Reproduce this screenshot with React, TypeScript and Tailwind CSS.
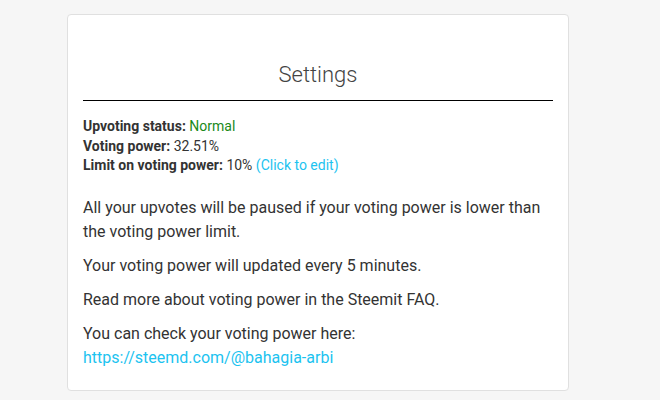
import React from "react";

export default function App() {
  return (
    <div className="min-h-[400px] w-[660px] bg-[#f6f6f6] pt-[14px]" style={{ fontFamily: "Roboto, 'Liberation Sans', sans-serif" }}>
      <div className="ml-[67px] w-[502px] h-[377px] rounded-[4px] border border-[#e0e0e0] bg-white px-[15px] text-[#333]">
        <h1 className="pt-[47px] pb-[13px] text-center text-[22px] font-light leading-[25px] text-[#444] border-b border-black">Settings</h1>
        <div className="mt-[16px] text-[14px] leading-[19.5px]">
          <div><span className="font-bold">Upvoting status:</span> <span className="text-[#1a8a1a]">Normal</span></div>
          <div><span className="font-bold">Voting power:</span> 32.51%</div>
          <div><span className="font-bold">Limit on voting power:</span> 10% <span className="text-[#1cc3f0]">(Click to edit)</span></div>
        </div>
        <div className="mt-[20px] text-[16px] leading-[24px]">
          <p>All your upvotes will be paused if your voting power is lower than the voting power limit.</p>
          <p className="mt-[10px]">Your voting power will updated every 5 minutes.</p>
          <p className="mt-[10px]">Read more about voting power in the Steemit FAQ.</p>
          <p className="mt-[10px]">You can check your voting power here:<br /><span className="text-[#1cc3f0]">https://steemd.com/@bahagia-arbi</span></p>
        </div>
      </div>
    </div>
  );
}
